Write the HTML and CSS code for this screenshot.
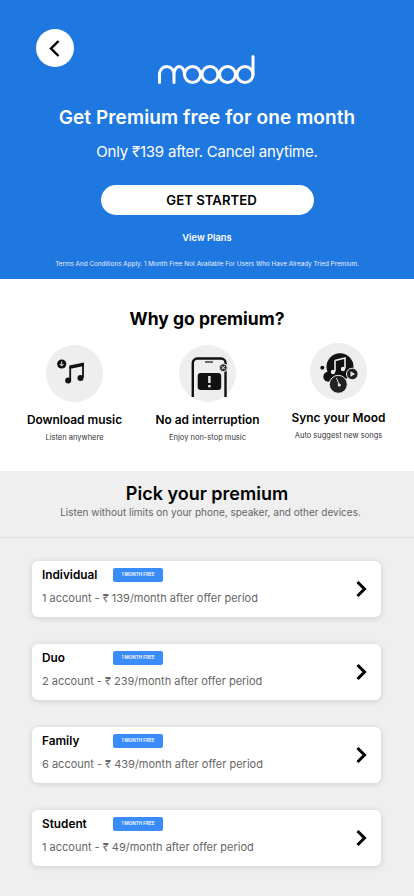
FILE: index.html
```html
<!DOCTYPE html>
<html lang="en">
<head>
    <meta charset="UTF-8">
    <meta name="viewport" content="width=device-width, initial-scale=1.0">
    <title>Moood Premium</title>
    <link rel="stylesheet" href="styles.css">
</head>
<body>
    <header class="hero">
        <a href="#" class="back" aria-label="Back">
            <svg width="38" height="38" viewBox="0 0 38 38" fill="none" stroke="#000" stroke-width="2.4"><polyline points="22.5,12 15,19.5 22.5,27"/></svg>
        </a>
        <svg class="logo" width="98" height="30" viewBox="0 0 98 30" fill="none" stroke="#fff" stroke-width="3" stroke-linecap="round" role="img" aria-label="moood">
            <path d="M1.5 27.5V19.5a7.25 8 0 0 1 14.5 0V27.5M16 19.5a5.25 8 0 0 1 10.5 0"/>
            <circle cx="34.5" cy="19.5" r="8"/>
            <circle cx="52" cy="19.5" r="8"/>
            <circle cx="69.5" cy="19.5" r="8"/>
            <circle cx="87" cy="19.5" r="8"/>
            <path d="M95 1.5V19.5"/>
        </svg>
        <h1>Get Premium free for one month</h1>
        <p class="hero-sub">Only ₹139 after. Cancel anytime.</p>
        <a href="#" class="cta">GET STARTED</a>
        <a href="#" class="view-plans">View Plans</a>
        <p class="terms">Terms And Conditions Apply. 1 Month Free Not Available For Users Who Have Already Tried Premium.</p>
    </header>

    <section class="why">
        <h2>Why go premium?</h2>
        <div class="perks">
            <div class="perk">
                <div class="perk-icon">
                    <svg width="57" height="57" viewBox="0 0 57 57">
                        <circle cx="15.7" cy="19" r="4.6" fill="#111"/>
                        <path d="M15.7 16.5v4M13.8 19l1.9 2 1.9-2" fill="none" stroke="#eee" stroke-width="1"/>
                        <path d="M24.2 22v13M37 19v13.5" fill="none" stroke="#111" stroke-width="1.8"/>
                        <path d="M23.3 20.5l14.6-3v3.4l-14.6 3z" fill="#111"/>
                        <circle cx="22.2" cy="35.5" r="3" fill="#111"/>
                        <circle cx="34.5" cy="33" r="3" fill="#111"/>
                    </svg>
                </div>
                <h3>Download music</h3>
                <p>Listen anywhere</p>
            </div>
            <div class="perk">
                <div class="perk-icon">
                    <svg width="57" height="57" viewBox="0 0 57 57">
                        <path d="M13.8 52V18a4.5 4.5 0 0 1 4.5-4.5H42a4.5 4.5 0 0 1 4.5 4.5V52" fill="none" stroke="#111" stroke-width="2.4"/>
                        <path d="M26 17h8" stroke="#111" stroke-width="1.2"/>
                        <rect x="18.7" y="28" width="23.5" height="17" rx="3" fill="#111"/>
                        <rect x="29.2" y="31" width="2.4" height="7" fill="#eee"/>
                        <rect x="29.2" y="40" width="2.4" height="2.4" fill="#eee"/>
                        <circle cx="44.3" cy="22.7" r="4" fill="#333" stroke="#eee" stroke-width="1"/>
                        <path d="M42.8 21.2l3 3m0-3l-3 3" stroke="#eee" stroke-width="1"/>
                    </svg>
                </div>
                <h3>No ad interruption</h3>
                <p>Enjoy non-stop music</p>
            </div>
            <div class="perk perk-sync">
                <div class="perk-icon">
                    <svg width="57" height="57" viewBox="0 0 57 57">
                        <circle cx="12.3" cy="24.7" r="2" fill="#111"/>
                        <circle cx="30" cy="23.7" r="13.5" fill="#111"/>
                        <circle cx="18.3" cy="33.7" r="5" fill="#111"/>
                        <path d="M25 17.5l10-2.5v10.5M25 17.5v11" fill="none" stroke="#eee" stroke-width="1.6"/>
                        <circle cx="23" cy="29" r="2.2" fill="#eee"/>
                        <circle cx="33" cy="26" r="2.2" fill="#eee"/>
                        <circle cx="42.3" cy="31" r="5.8" fill="#222" stroke="#eee" stroke-width="1"/>
                        <path d="M40.5 28.2l4.5 2.8-4.5 2.8z" fill="#eee"/>
                        <circle cx="28.3" cy="41.3" r="9" fill="#222" stroke="#eee" stroke-width="1"/>
                        <path d="M26.5 35l2.5 6.5" stroke="#eee" stroke-width="0.9"/>
                        <circle cx="29.3" cy="42" r="1.5" fill="#eee"/>
                    </svg>
                </div>
                <h3>Sync your Mood</h3>
                <p>Auto suggest new songs</p>
            </div>
        </div>
    </section>

    <section class="plans">
        <div class="plans-head">
            <h2>Pick your premium</h2>
            <p>Listen without limits on your phone, speaker, and other devices.</p>
        </div>
        <div class="plan-list">
            <a href="#" class="plan">
                <div class="plan-info">
                    <div class="plan-top"><span class="plan-name">Individual</span><span class="badge">1 MONTH FREE</span></div>
                    <div class="plan-desc">1 account - ₹ 139/month after offer period</div>
                </div>
                <svg class="chevron" width="12" height="18" viewBox="0 0 12 18" fill="none" stroke="#000" stroke-width="3"><polyline points="2.5,2 9.5,9 2.5,16"/></svg>
            </a>
            <a href="#" class="plan">
                <div class="plan-info">
                    <div class="plan-top"><span class="plan-name">Duo</span><span class="badge">1 MONTH FREE</span></div>
                    <div class="plan-desc">2 account - ₹ 239/month after offer period</div>
                </div>
                <svg class="chevron" width="12" height="18" viewBox="0 0 12 18" fill="none" stroke="#000" stroke-width="3"><polyline points="2.5,2 9.5,9 2.5,16"/></svg>
            </a>
            <a href="#" class="plan">
                <div class="plan-info">
                    <div class="plan-top"><span class="plan-name">Family</span><span class="badge">1 MONTH FREE</span></div>
                    <div class="plan-desc">6 account - ₹ 439/month after offer period</div>
                </div>
                <svg class="chevron" width="12" height="18" viewBox="0 0 12 18" fill="none" stroke="#000" stroke-width="3"><polyline points="2.5,2 9.5,9 2.5,16"/></svg>
            </a>
            <a href="#" class="plan">
                <div class="plan-info">
                    <div class="plan-top"><span class="plan-name">Student</span><span class="badge">1 MONTH FREE</span></div>
                    <div class="plan-desc">1 account - ₹ 49/month after offer period</div>
                </div>
                <svg class="chevron" width="12" height="18" viewBox="0 0 12 18" fill="none" stroke="#000" stroke-width="3"><polyline points="2.5,2 9.5,9 2.5,16"/></svg>
            </a>
        </div>
    </section>
</body>
</html>
```

FILE: styles.css
```css
* { box-sizing: border-box; }
html, body { margin: 0; padding: 0; }
body { width: 414px; height: 896px; overflow: hidden; font-family: Inter, "Noto Sans", sans-serif; background: #efefef; color: #000; }
a { text-decoration: none; color: inherit; }
h1, h2, h3, p { margin: 0; }

.hero { position: relative; height: 279px; padding-top: 55px; background: #1f77e0; color: #fff; text-align: center; display: flex; flex-direction: column; align-items: center; }
.back { position: absolute; top: 29px; left: 36px; width: 38px; height: 38px; border-radius: 50%; background: #fff; }
.back svg { display: block; }
.logo { display: block; margin-left: -1px; }
.hero h1 { margin-top: 19px; font-size: 19px; line-height: 28px; font-weight: 600; letter-spacing: 0.1px; }
.hero-sub { margin-top: 8px; font-size: 15px; line-height: 24px; letter-spacing: -0.2px; }
.cta { margin-top: 21px; width: 213px; height: 30px; padding-left: 9px; line-height: 30px; border-radius: 15px; background: #fff; color: #000; font-size: 13.2px; font-weight: 600; }
.view-plans { margin-top: 16px; font-size: 9.3px; line-height: 14px; font-weight: 600; }
.terms { margin-top: 14px; font-size: 6.35px; line-height: 10px; color: #e6f0fd; }

.why { height: 192px; background: #fff; padding-top: 29px; }
.why h2 { font-size: 17.5px; line-height: 22px; font-weight: 700; text-align: center; }
.perks { margin-top: 15px; padding-left: 19.5px; display: flex; }
.perk { width: 110px; text-align: center; }
.perk + .perk { margin-left: 23px; }
.perk-sync.perk { margin-left: 21px; }
.perk-icon { width: 57px; height: 57px; margin: 0 auto; border-radius: 50%; background: #eee; }
.perk-icon svg { display: block; }
.perk-sync .perk-icon { margin-top: -2px; margin-bottom: 2px; }
.perk h3 { margin-top: 10px; font-size: 11.9px; line-height: 16px; font-weight: 600; white-space: nowrap; }
.perk p { margin-top: 5px; font-size: 7.5px; line-height: 10px; color: #333; white-space: nowrap; }

.plans-head { height: 67px; padding-top: 12px; text-align: center; border-bottom: 1px solid #e0e0e0; }
.plans-head h2 { font-size: 18px; line-height: 22px; font-weight: 600; }
.plans-head p { margin-top: 1px; padding-left: 7px; font-size: 10px; line-height: 13px; color: #666; }

.plan-list { padding: 23px 33px 0 32px; display: flex; flex-direction: column; gap: 27px; }
.plan { height: 56px; padding: 0 14px 0 10px; display: flex; justify-content: space-between; align-items: center; background: #fff; border-radius: 6px; box-shadow: 0 1px 6px rgba(0,0,0,0.14); }
.plan-info { align-self: flex-start; padding-top: 7px; }
.plan-top { display: flex; align-items: center; height: 14px; }
.plan-name { width: 71px; font-size: 11.8px; font-weight: 600; }
.badge { width: 50px; height: 14px; line-height: 14px; text-align: center; border-radius: 2px; background: #3a8cfb; color: #fff; font-size: 4.6px; font-weight: 600; white-space: nowrap; }
.plan-desc { margin-top: 8px; font-size: 11px; line-height: 16px; color: #666; white-space: nowrap; }
```
